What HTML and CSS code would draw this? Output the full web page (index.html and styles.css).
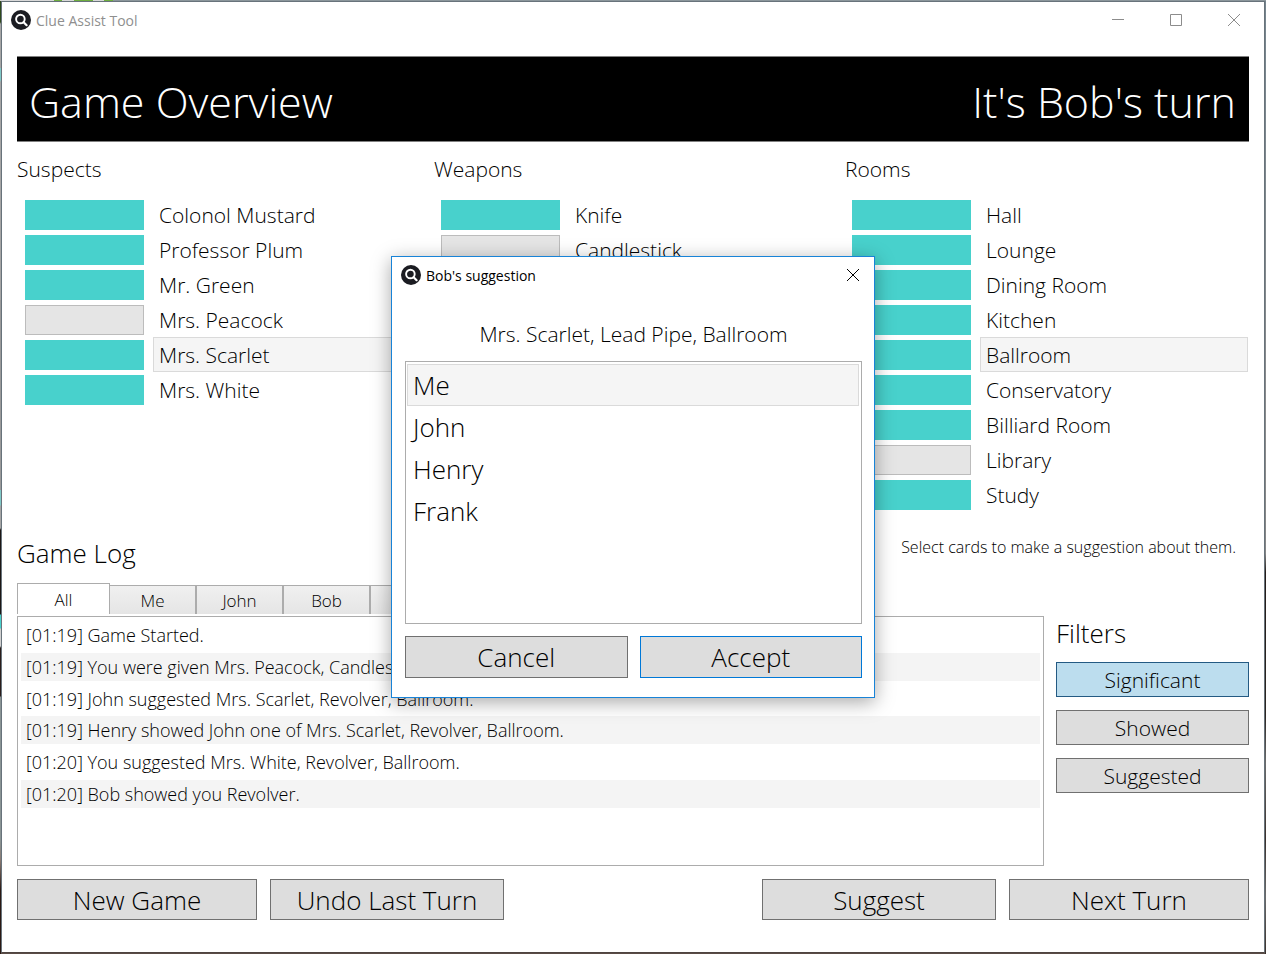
FILE: index.html
```html
<!DOCTYPE html>
<html lang="en">
<head>
<meta charset="utf-8">
<title>Clue Assist Tool</title>
<link rel="stylesheet" href="styles.css">
</head>
<body>
<div class="window">
  <div class="titlebar">
    <svg class="app-icon" viewBox="0 0 20 20" aria-hidden="true"><circle cx="10" cy="10" r="10" fill="#1b1c22"/><circle cx="9.4" cy="9" r="4.3" fill="none" stroke="#fff" stroke-width="1.9"/><path d="M12.6 12.2l3 3" stroke="#fff" stroke-width="2.2" stroke-linecap="round"/></svg>
    <span class="titlebar-text">Clue Assist Tool</span>
    <div class="window-controls">
      <button class="win-btn" aria-label="Minimize"><svg viewBox="0 0 12 12"><path d="M0 5.5h12"/></svg></button>
      <button class="win-btn" aria-label="Maximize"><svg viewBox="0 0 12 12"><path d="M.5.5h11v11H.5z"/></svg></button>
      <button class="win-btn" aria-label="Close"><svg viewBox="0 0 12 12"><path d="M0 0l12 12M12 0L0 12"/></svg></button>
    </div>
  </div>
  <main class="content">
    <header class="banner">
      <h1>Game Overview</h1>
      <p>It's Bob's turn</p>
    </header>
    <section class="cards">
      <div class="card-column">
        <h2>Suspects</h2>
        <ul class="card-list">
          <li><button class="mark" aria-label="Mark Colonol Mustard"></button><button class="card-name">Colonol Mustard</button></li>
          <li><button class="mark" aria-label="Mark Professor Plum"></button><button class="card-name">Professor Plum</button></li>
          <li><button class="mark" aria-label="Mark Mr. Green"></button><button class="card-name">Mr. Green</button></li>
          <li><button class="mark mark-off" aria-label="Mark Mrs. Peacock"></button><button class="card-name">Mrs. Peacock</button></li>
          <li><button class="mark" aria-label="Mark Mrs. Scarlet"></button><button class="card-name selected">Mrs. Scarlet</button></li>
          <li><button class="mark" aria-label="Mark Mrs. White"></button><button class="card-name">Mrs. White</button></li>
        </ul>
      </div>
      <div class="card-column">
        <h2>Weapons</h2>
        <ul class="card-list">
          <li><button class="mark" aria-label="Mark Knife"></button><button class="card-name">Knife</button></li>
          <li><button class="mark mark-off" aria-label="Mark Candlestick"></button><button class="card-name">Candlestick</button></li>
        </ul>
      </div>
      <div class="card-column">
        <h2>Rooms</h2>
        <ul class="card-list">
          <li><button class="mark" aria-label="Mark Hall"></button><button class="card-name">Hall</button></li>
          <li><button class="mark" aria-label="Mark Lounge"></button><button class="card-name">Lounge</button></li>
          <li><button class="mark" aria-label="Mark Dining Room"></button><button class="card-name">Dining Room</button></li>
          <li><button class="mark" aria-label="Mark Kitchen"></button><button class="card-name">Kitchen</button></li>
          <li><button class="mark" aria-label="Mark Ballroom"></button><button class="card-name selected">Ballroom</button></li>
          <li><button class="mark" aria-label="Mark Conservatory"></button><button class="card-name">Conservatory</button></li>
          <li><button class="mark" aria-label="Mark Billiard Room"></button><button class="card-name">Billiard Room</button></li>
          <li><button class="mark mark-off" aria-label="Mark Library"></button><button class="card-name">Library</button></li>
          <li><button class="mark" aria-label="Mark Study"></button><button class="card-name">Study</button></li>
        </ul>
      </div>
    </section>
    <div class="log-header">
      <h2 class="heading">Game Log</h2>
      <p class="hint">Select cards to make a suggestion about them.</p>
    </div>
    <div class="log-area">
      <section class="log">
        <div class="tabs" role="tablist">
          <button class="tab tab-active" role="tab" aria-selected="true">All</button>
          <button class="tab" role="tab">Me</button>
          <button class="tab" role="tab">John</button>
          <button class="tab" role="tab">Bob</button>
          <button class="tab" role="tab" aria-label="Henry"></button>
        </div>
        <ul class="log-list">
          <li>[01:19] Game Started.</li>
          <li>[01:19] You were given Mrs. Peacock, Candlestick.</li>
          <li>[01:19] John suggested Mrs. Scarlet, Revolver, Ballroom.</li>
          <li>[01:19] Henry showed John one of Mrs. Scarlet, Revolver, Ballroom.</li>
          <li>[01:20] You suggested Mrs. White, Revolver, Ballroom.</li>
          <li>[01:20] Bob showed you Revolver.</li>
        </ul>
      </section>
      <aside class="filters">
        <h2 class="heading">Filters</h2>
        <button class="filter filter-on" aria-pressed="true">Significant</button>
        <button class="filter" aria-pressed="false">Showed</button>
        <button class="filter" aria-pressed="false">Suggested</button>
      </aside>
    </div>
    <footer class="actions">
      <button class="action wide">New Game</button>
      <button class="action">Undo Last Turn</button>
      <button class="action push">Suggest</button>
      <button class="action wide">Next Turn</button>
    </footer>
  </main>
</div>
<div class="dialog" role="dialog" aria-labelledby="dialog-title">
  <div class="dialog-bar">
    <svg class="app-icon" viewBox="0 0 20 20" aria-hidden="true"><circle cx="10" cy="10" r="10" fill="#1b1c22"/><circle cx="9.4" cy="9" r="4.3" fill="none" stroke="#fff" stroke-width="1.9"/><path d="M12.6 12.2l3 3" stroke="#fff" stroke-width="2.2" stroke-linecap="round"/></svg>
    <span id="dialog-title" class="titlebar-text">Bob's suggestion</span>
    <button class="dialog-close" aria-label="Close"><svg viewBox="0 0 12 12"><path d="M0 0l12 12M12 0L0 12"/></svg></button>
  </div>
  <p class="dialog-text">Mrs. Scarlet, Lead Pipe, Ballroom</p>
  <ul class="players">
    <li><button class="player selected">Me</button></li>
    <li><button class="player">John</button></li>
    <li><button class="player">Henry</button></li>
    <li><button class="player">Frank</button></li>
  </ul>
  <div class="dialog-actions">
    <button class="action">Cancel</button>
    <button class="action default">Accept</button>
  </div>
</div>
</body>
</html>
```

FILE: styles.css
```css
* { box-sizing: border-box; }

body {
  margin: 0;
  min-height: 100vh;
  padding: 1px;
  display: flex;
  background:
    linear-gradient(90deg, #d9d9d9 0 54px, #6fae3f 54px 62px, #d9d9d9 62px 74px, #6fae3f 74px 93px, #d9d9d9 93px 104px, #6fae3f 104px 113px, #8b969b 113px) top / 100% 1px no-repeat,
    linear-gradient(#2f4a1c 0 22px, #a5a5a5 24px 68px, #7fc9c7 68px 80px, #a5a5a5 82px 300px, #9a9a9a 300px 490px, #7fc9c7 490px 505px, #a5a5a5 506px 528px, #1c1614 530px 614px, #48d1cc 615px 628px, #d0d0d0 629px 646px, #2a1d1a 648px 696px, #8a9494 697px 840px, #8a7a72 860px, #2a1812 890px) left / 1px 100% no-repeat,
    linear-gradient(#76858e, #8a8a8a 45%, #858585 58%, #241c19 60%, #2c2622 75%, #6b6b6b 80%, #3a302b 88%, #6b6b6b 94%, #3a302b) right / 1px 100% no-repeat,
    #5a4c46;
  color: #000;
  font-family: "Open Sans", "Noto Sans", sans-serif;
  font-weight: 300;
}

h1, h2, p, ul { margin: 0; padding: 0; font-weight: 300; }
ul { list-style: none; }
button { font: inherit; color: inherit; border: 0; background: none; padding: 0; }

.window {
  flex: 1;
  display: flex;
  flex-direction: column;
  background: #fff;
  border: 1px solid #68737b;
  border-bottom-color: #4f4541;
}

.titlebar { display: flex; align-items: center; height: 36px; padding: 0 1px 0 9px; color: #8f8f8f; }
.app-icon { width: 20px; height: 20px; margin-right: 5px; }
.titlebar-text { font-size: 14px; font-weight: 400; }
.window-controls { display: flex; margin-left: auto; }
.win-btn { width: 58px; height: 36px; display: grid; place-items: center; }
.win-btn svg, .dialog-close svg { width: 12px; height: 12px; fill: none; stroke: #8c8c8c; stroke-width: 1; }

.content { flex: 1; display: flex; flex-direction: column; padding: 18px 15px 32px; }

.banner {
  display: flex;
  justify-content: space-between;
  align-items: center;
  height: 86px;
  padding: 4px 13px 0 12px;
  background: #000;
  border: solid #808080;
  border-width: 1px 0;
  color: #fff;
  font-size: 43px;
}
.banner h1 { font-size: inherit; }

.cards { display: grid; grid-template-columns: 417fr 411fr 404fr; padding-top: 11px; }
.card-column h2 { font-size: 21px; line-height: 32px; }
.card-list { padding: 12px 1px 0 7px; }
.card-column:first-child .card-list { padding-left: 8px; }
.card-list li { display: flex; align-items: center; gap: 9px; height: 35px; }
.mark { width: 119px; height: 30px; background: #48d1cc; }
.mark-off { background: #e5e5e5; border: 1px solid #bcbcbc; }
.card-name { flex: 1; height: 35px; padding-left: 5px; border: 1px solid transparent; text-align: left; font-size: 21px; line-height: 32px; }
.selected { background: #f5f5f5; border-color: #dadada; }

.log-header { display: flex; justify-content: space-between; height: 71px; padding: 19px 13px 0 0; }
.heading { font-size: 26px; line-height: 44px; }
.hint { font-size: 16px; line-height: 32px; }

.log-area { flex: 1; display: flex; gap: 12px; }
.log { flex: 1; display: flex; flex-direction: column; }
.tabs { display: flex; align-items: flex-end; height: 32px; padding-bottom: 1px; }
.tab {
  width: 87px;
  height: 29px;
  border: 1px solid #acacac;
  border-width: 1px 1px 0;
  background: linear-gradient(#f0f0f0, #e5e5e5);
  font-size: 17px;
}
.tab-active { width: 93px; height: 31px; background: #fff; }
.tab-active + .tab { width: 86px; border-left: 0; }
.log-list { flex: 1; margin-top: 1px; padding: 4px 3px; border: 1px solid #acacac; font-size: 18px; }
.log-list li { height: 28px; margin-bottom: 4px; padding-left: 5px; line-height: 29px; }
.log-list li:nth-child(3n) { margin-bottom: 3px; }
.log-list li:nth-child(even) { background: #f4f4f4; }

.filters { display: flex; flex-direction: column; gap: 13px; width: 193px; padding-top: 28px; }
.filters .heading { margin-bottom: -6px; }
.filter { height: 35px; border: 1px solid #707070; background: #ddd; font-size: 21px; }
.filter-on { background: #bcddee; border-color: #245a83; }

.actions { display: flex; gap: 13px; padding-top: 13px; }
.action { width: 234px; height: 41px; border: 1px solid #707070; background: #ddd; font-size: 26px; line-height: 38px; }
.wide { width: 240px; }
.push { margin-left: auto; }

.dialog {
  position: absolute;
  left: 391px;
  top: 256px;
  width: 484px;
  padding: 0 12px 19px 13px;
  background: #fff;
  border: 1px solid #1883d7;
  box-shadow: 0 4px 18px rgba(0, 0, 0, .35);
}
.dialog-bar { display: flex; align-items: center; height: 36px; margin-left: -4px; }
.dialog-close { width: 18px; height: 36px; margin-left: auto; display: grid; place-items: center; }
.dialog-close svg { stroke: #000; }
.dialog-text { padding: 24px 0 10px; text-align: center; font-size: 21px; line-height: 34px; }
.players { height: 263px; padding: 2px 2px 2px 1px; border: 1px solid #acacac; }
.player { display: block; width: 100%; height: 42px; padding-left: 5px; border: 1px solid transparent; text-align: left; font-size: 26px; line-height: 40px; }
.player.selected { background: #f5f5f5; border-color: #dadada; }
.dialog-actions { display: flex; gap: 12px; padding-top: 12px; }
.dialog-actions .action { flex: 1; height: 42px; }
.dialog-actions .default { border-color: #0078d7; }
```
